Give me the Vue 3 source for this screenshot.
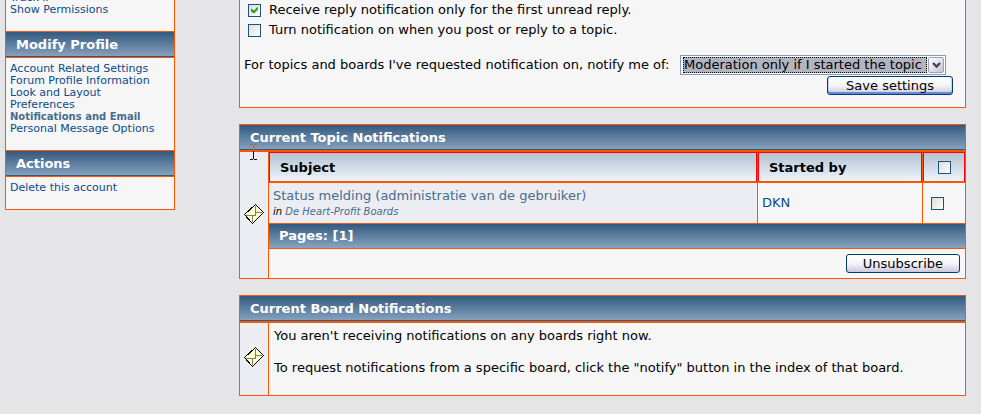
<template>
  <div class="page">
    <aside class="sidebar">
      <nav v-for="section in sections" :key="section.title" class="side-section">
        <h3 class="side-title">{{ section.title }}</h3>
        <a
          v-for="link in section.links"
          :key="link"
          href="#"
          :class="{ active: link === activeLink }"
        >{{ link }}</a>
      </nav>
    </aside>

    <main class="content">
      <section class="panel settings">
        <label class="check-line">
          <input type="checkbox" v-model="firstOnly" />
          <span>Receive reply notification only for the first unread reply.</span>
        </label>
        <label class="check-line">
          <input type="checkbox" v-model="autoNotify" />
          <span>Turn notification on when you post or reply to a topic.</span>
        </label>
        <div class="select-line">
          <label for="notify-types">For topics and boards I've requested notification on, notify me of:</label>
          <span class="select-box">
            <select id="notify-types" v-model="notifyTypes">
              <option value="replies">Replies and moderation</option>
              <option value="started">Moderation only if I started the topic</option>
              <option value="none">Only replies</option>
            </select>
            <span class="arrow">
              <svg width="9" height="7" viewBox="0 0 9 7"><path d="M1 1L4.500 4.500L8 1" fill="none" stroke="#444450" stroke-width="2.400" /></svg>
            </span>
          </span>
        </div>
        <div class="save-line">
          <button type="button" class="btn focused">Save settings</button>
        </div>
      </section>

      <section class="panel">
        <h3 class="title">Current Topic Notifications</h3>
        <svg class="cursor" width="7" height="16" viewBox="0 0 7 16">
          <path d="M0 .5H3M4 .5H7" stroke="#b06a3c" />
          <path d="M3.500 1V5" stroke="#a0704c" />
          <path d="M3.500 5V7" stroke="#30b0c0" />
          <path d="M3.500 7V15M0 15.500H3M4 15.500H7" stroke="#111" />
        </svg>
        <table class="topics">
          <colgroup>
            <col class="col-icon" />
            <col />
            <col class="col-user" />
            <col class="col-check" />
          </colgroup>
          <tbody>
            <tr class="head">
              <td rowspan="4" class="icon-cell">
                <svg class="mail" width="20" height="20" viewBox="0 0 20 20" shape-rendering="crispEdges">
                  <path d="M11.500 .5L19.500 8.500L8.500 19.500L.5 10.500Z" fill="#ffffcf" stroke="#000" />
                  <path d="M11.500 2V11.500H2M12 8.500H18M8.500 12V18" fill="none" stroke="#808070" />
                </svg>
              </td>
              <th>Subject</th>
              <th>Started by</th>
              <th class="check-head"><input type="checkbox" v-model="allChecked" aria-label="Select all topics" /></th>
            </tr>
            <tr class="topic">
              <td class="subject">
                <a href="#" class="topic-link">Status melding (administratie van de gebruiker)</a>
                <div class="board">in <a href="#">De Heart-Profit Boards</a></div>
              </td>
              <td class="user"><a href="#">DKN</a></td>
              <td class="check"><input type="checkbox" v-model="topicChecked" aria-label="Select topic" /></td>
            </tr>
            <tr>
              <td colspan="3" class="pages">Pages: [1]</td>
            </tr>
            <tr>
              <td colspan="3" class="foot"><button type="button" class="btn unsub">Unsubscribe</button></td>
            </tr>
          </tbody>
        </table>
      </section>

      <section class="panel">
        <h3 class="title">Current Board Notifications</h3>
        <div class="boards">
          <div class="icon-cell">
            <svg class="mail" width="20" height="20" viewBox="0 0 20 20" shape-rendering="crispEdges">
              <path d="M11.500 .5L19.500 8.500L8.500 19.500L.5 10.500Z" fill="#ffffcf" stroke="#000" />
              <path d="M11.500 2V11.500H2M12 8.500H18M8.500 12V18" fill="none" stroke="#808070" />
            </svg>
          </div>
          <div class="boards-text">
            <p>You aren't receiving notifications on any boards right now.</p>
            <p>To request notifications from a specific board, click the "notify" button in the index of that board.</p>
          </div>
        </div>
      </section>
    </main>
  </div>
</template>

<script setup>
import { ref } from "vue";

const activeLink = "Notifications and Email";

const sections = [
  { title: "Profile Info", links: ["Track IP", "Show Permissions"] },
  {
    title: "Modify Profile",
    links: [
      "Account Related Settings",
      "Forum Profile Information",
      "Look and Layout",
      "Preferences",
      "Notifications and Email",
      "Personal Message Options",
    ],
  },
  { title: "Actions", links: ["Delete this account"] },
];

const firstOnly = ref(true);
const autoNotify = ref(false);
const notifyTypes = ref("started");
const allChecked = ref(false);
const topicChecked = ref(false);
</script>

<style>
body {
  margin: 0;
  background: #e5e5e8;
}
</style>

<style scoped>
.page {
  display: flex;
  align-items: flex-start;
  gap: 64px;
  padding: 0 15px 18px 5px;
  font-family: Verdana, "DejaVu Sans", sans-serif;
  font-size: 13px;
  line-height: 16px;
  color: #000000;
}

a {
  color: #0b4a8b;
  text-decoration: none;
}

h3,
p {
  margin: 0;
}

/* sidebar */
.sidebar {
  box-sizing: border-box;
  flex: 0 0 170px;
  margin-top: -40px;
  border: 1px solid #ff5500;
  background: #f6f6f6;
}

.side-section {
  display: flex;
  flex-direction: column;
  padding-bottom: 15px;
  font-size: 11px;
  line-height: 12px;
}

.side-section a {
  padding-left: 4px;
  white-space: nowrap;
}

.side-section .active {
  color: #476c8e;
  font-size: 10px;
  font-weight: bold;
}

.side-title {
  margin-bottom: 5px;
  padding: 0 10px;
  border-bottom: 1px solid #ff5500;
  background: linear-gradient(#33597e, #88a4c0);
  box-shadow: inset 0 -1px #33597e;
  color: #ffffff;
  font-size: 13px;
  line-height: 25px;
}

.side-section + .side-section .side-title {
  border-top: 1px solid #ff5500;
}

/* main column */
.content {
  flex: 1;
  min-width: 0;
}

.panel {
  position: relative;
  margin-bottom: 16px;
  border: 1px solid #ff5500;
  background: #f6f6f6;
}

.panel:last-child {
  margin-bottom: 0;
}

.settings {
  border-top: 0;
  padding: 0 12px 12px 4px;
}

.check-line {
  display: flex;
  align-items: center;
  gap: 8px;
  height: 20px;
  padding-left: 4px;
}

input[type="checkbox"] {
  appearance: none;
  display: block;
  box-sizing: border-box;
  flex: none;
  width: 13px;
  height: 13px;
  margin: 0;
  border: 1px solid #1c5180;
  background: linear-gradient(135deg, #dcdcd7, #ffffff);
}

input[type="checkbox"]:checked::before {
  content: "";
  display: block;
  width: 7px;
  height: 7px;
  margin: 2px;
  background: #21a121;
  clip-path: polygon(0 2px, 3px 4px, 7px 0, 7px 3px, 3px 7px, 0 5px);
}

.select-line {
  display: flex;
  align-items: center;
  justify-content: space-between;
  margin-top: 15px;
  padding-right: 7px;
  white-space: nowrap;
}

.select-box {
  box-sizing: border-box;
  display: flex;
  flex: none;
  width: 266px;
  height: 20px;
  padding: 1px;
  border: 1px solid #7f9db9;
  background: #ffffff;
}

.select-box select {
  appearance: none;
  flex: 1;
  min-width: 0;
  margin: 0 1px;
  padding: 0;
  border: 1px dotted #000000;
  border-radius: 0;
  background: #b2b4bf;
  color: #000000;
  font: inherit;
  line-height: 14px;
}

.arrow {
  box-sizing: border-box;
  display: flex;
  flex: none;
  align-items: center;
  justify-content: center;
  width: 16px;
  border: 1px solid #a0a0b4;
  border-radius: 2px;
  background: linear-gradient(135deg, #ffffff, #c4c4d6);
}

.save-line {
  display: flex;
  justify-content: flex-end;
  margin-top: 1px;
}

.btn {
  box-sizing: border-box;
  height: 19px;
  padding: 0 18px;
  border: 1px solid #003c74;
  border-radius: 3px;
  background: linear-gradient(#ffffff, #f4f4f8 50%, #c9c9dc);
  color: #000000;
  font: inherit;
  line-height: 16px;
}

.focused {
  box-shadow: inset 0 -2px #6888dc, inset 1px 0 #c6d4f4, inset -1px 0 #c6d4f4;
}

.title {
  padding: 0 10px;
  border-bottom: 2px solid #ff5500;
  background: linear-gradient(#33597e, #88a4c0);
  box-shadow: inset 0 -1px #33597e;
  color: #ffffff;
  font-size: 13px;
  line-height: 25px;
}

/* text pointer resting over the panel title */
.cursor {
  position: absolute;
  top: 19px;
  left: 10px;
}

.topics {
  width: 100%;
  border-spacing: 0;
  table-layout: fixed;
}

.col-icon {
  width: 29px;
}

.col-user {
  width: 165px;
}

.col-check {
  width: 43px;
}

.topics td,
.topics th {
  box-sizing: border-box;
  padding: 0;
}

.icon-cell {
  border-right: 1px solid #ff5500;
  background: #ecedf3;
  text-align: center;
  vertical-align: middle;
}

.topics .icon-cell {
  padding-bottom: 2px;
}

.mail {
  display: inline-block;
  vertical-align: middle;
}

.head th {
  height: 31px;
  padding: 1px 10px 0;
  border: 1px solid #ff0000;
  border-bottom: 2px solid #ff5500;
  background: linear-gradient(#b3c3d1, #edf4fb);
  font-weight: bold;
  text-align: left;
}

.head th + th {
  padding-left: 11px;
  border-left-color: #ff5500;
  box-shadow: inset 1px 0 #ff0000;
}

.head .check-head {
  padding: 0 0 0 15px;
}

.topic td {
  height: 41px;
  border-bottom: 1px solid #ff5500;
}

.topic .subject {
  padding: 1px 4px 0;
  background: #ecedf3;
}

.topic .user,
.topic .check {
  padding: 0 4px;
  border-left: 1px solid #ff5500;
}

.topic .check {
  padding-left: 8px;
}

.topic-link,
.board a {
  color: #476c8e;
}

.board {
  font-size: 10px;
  font-style: italic;
  line-height: 16px;
}

.topics .pages {
  height: 25px;
  padding: 0 10px;
  border-bottom: 1px solid #ff5500;
  background: linear-gradient(#33597e, #88a4c0);
  color: #ffffff;
  font-weight: bold;
}

.topics .foot {
  height: 29px;
  padding: 0 5px;
  text-align: right;
}

.unsub {
  display: inline-block;
  padding: 0 16px;
  vertical-align: middle;
}

.boards {
  display: flex;
}

.boards .icon-cell {
  box-sizing: border-box;
  display: flex;
  flex: 0 0 29px;
  align-items: center;
  justify-content: center;
  padding-bottom: 4px;
}

.boards-text {
  display: flex;
  flex-direction: column;
  gap: 16px;
  padding: 5px 4px 19px 5px;
}
</style>
